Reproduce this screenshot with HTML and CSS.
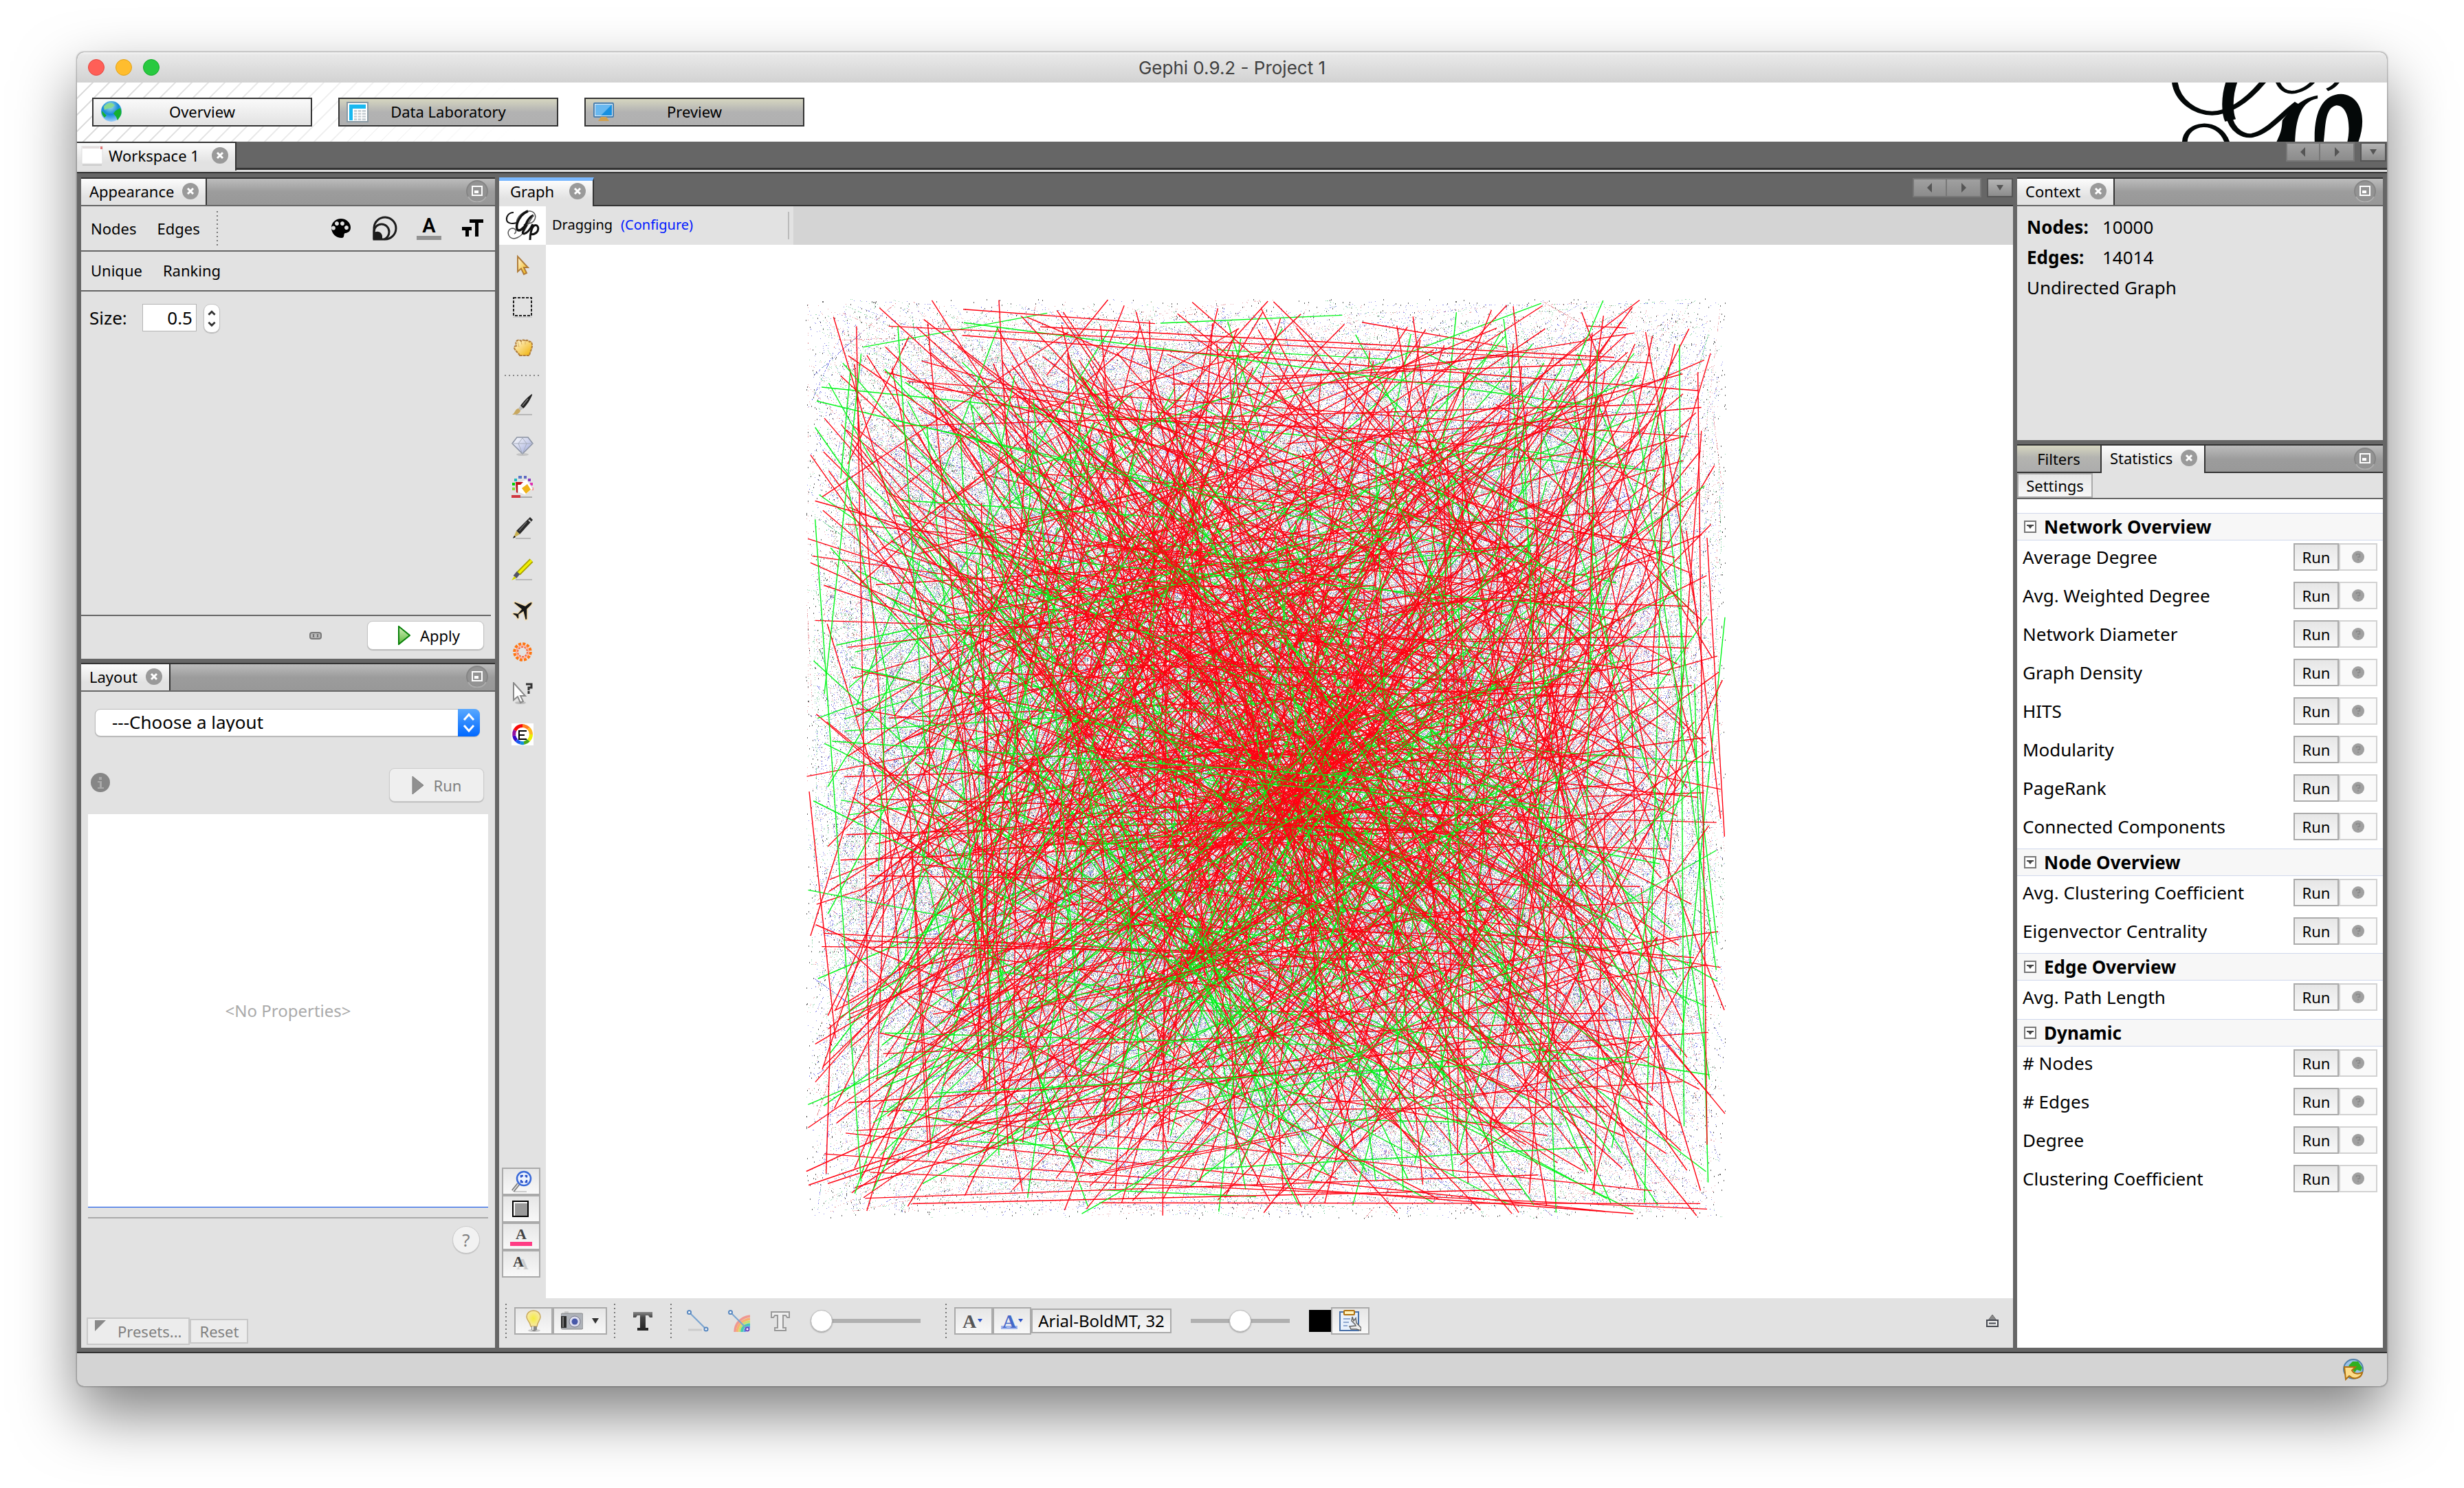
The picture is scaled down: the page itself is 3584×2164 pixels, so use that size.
FILE: index.html
```html
<!DOCTYPE html>
<html lang="en">
<head>
<meta charset="utf-8">
<title>Gephi 0.9.2 - Project 1</title>
<link rel="stylesheet" href="styles.css">
</head>
<body>
<svg class="sprite" aria-hidden="true">
  <defs>
    <linearGradient id="gold" x1="0" y1="0" x2="1" y2="1"><stop offset="0" stop-color="#fff8e0"/><stop offset="1" stop-color="#f0b000"/></linearGradient>
    <linearGradient id="leaf" x1="0" y1="0" x2="0" y2="1"><stop offset="0" stop-color="#d8f0c0"/><stop offset="1" stop-color="#58b838"/></linearGradient>
    <linearGradient id="gem" x1="0" y1="0" x2="1" y2="1"><stop offset="0" stop-color="#fff"/><stop offset="1" stop-color="#9aa4d8"/></linearGradient>
    <radialGradient id="ocean" cx=".45" cy=".25" r=".8"><stop offset="0" stop-color="#a8e0e8"/><stop offset=".5" stop-color="#1488d8"/><stop offset="1" stop-color="#b0d8ff"/></radialGradient>
    <linearGradient id="steel" x1="0" y1="0" x2="0" y2="1"><stop offset="0" stop-color="#888"/><stop offset=".3" stop-color="#444"/><stop offset="1" stop-color="#222"/></linearGradient>
    <radialGradient id="bulb"><stop offset="0" stop-color="#f4ec40"/><stop offset="1" stop-color="#f8e8a8"/></radialGradient>
  </defs>
  <symbol id="i-close" viewBox="0 0 24 24"><circle cx="12" cy="12" r="12" fill="#9a9a9a"/><path d="M8 8l8 8M16 8l-8 8" stroke="#fff" stroke-width="3"/></symbol>
  <symbol id="i-min" viewBox="0 0 32 32"><circle cx="16" cy="16" r="15" fill="#939393" stroke="#858585" stroke-width="2"/><path d="M3 24a15 15 0 0 0 26 0" fill="none" stroke="#adadad" stroke-width="2"/><rect x="9" y="9" width="14" height="13" fill="none" stroke="#fff" stroke-width="2"/><rect x="12" y="15" width="6" height="4" fill="#fff"/></symbol>
  <symbol id="i-globe" viewBox="0 0 32 32"><circle cx="16" cy="15" r="15" fill="url(#ocean)"/><path d="M5 8c3-4 8-6 12-5l4 3-5 4-6 1-4 2z" fill="#88d890"/><path d="M2 14l4 4 3 3-3 3c-3-3-4-6-4-10zM22 14l7-4c2 4 2 9 0 12l-4 6-2-5-4-5z" fill="#14b030"/></symbol>
  <symbol id="i-table" viewBox="0 0 32 32"><rect x="1" y="2" width="30" height="28" fill="#fff" stroke="#8a9aa4" stroke-width="2"/><path d="M4 5h24v6H9v17H4z" fill="#18b8f0"/><path d="M11 13h17v15H11z" fill="#c4ccd2"/><path d="M11 16.500h17M11 20.500h17M11 24.500h17M16 12v16M22 12v16" stroke="#fff" stroke-width="1.500"/></symbol>
  <symbol id="i-screen" viewBox="0 0 32 32"><rect x="2" y="3" width="28" height="20" rx="1" fill="#e8eef4" stroke="#4880b0" stroke-width="2"/><path d="M4 5h24v16H4z" fill="#1890e0"/><path d="M4 5h24L12 21H4z" fill="#68b8f0"/><path d="M12 23h8l4 6H8z" fill="#d0a050"/></symbol>
  <symbol id="i-page" viewBox="0 0 32 32"><path d="M2 29h28v2H2z" fill="#ccc"/><rect x="1" y="3" width="30" height="25" fill="#fff" stroke="#ddd"/><path d="M2 3h25v3H2z" fill="#e4dede"/><path d="M28 3h3v4h-3z" fill="#e07878"/></symbol>
  <symbol id="i-left" viewBox="0 0 16 16"><path d="M11 1v14L4 8z"/></symbol>
  <symbol id="i-right" viewBox="0 0 16 16"><path d="M5 1v14l7-7z"/></symbol>
  <symbol id="i-down" viewBox="0 0 16 16"><path d="M3 4h10l-5 8z"/></symbol>
  <symbol id="i-palette" viewBox="0 0 36 36"><path d="M18 4c8 0 14 6 14 13 0 6-5 8-8 8-3 1 0 7-5 7C11 32 4 26 4 17 4 10 10 4 18 4z"/><path d="M9 17.500a2 2 0 1 0 0 .1M14 11a2 2 0 1 0 0 .1M22 11a2 2 0 1 0 0 .1M28 17a2 2 0 1 0 0 .1" stroke="#e2e2e2" fill="#e2e2e2" stroke-width="2"/></symbol>
  <symbol id="i-rings" viewBox="0 0 36 36"><g fill="none" stroke="#1c1c1c" stroke-width="3"><path d="M2 34V17A16 16 0 1 1 18 34z"/><path d="M2 34V23a11 11 0 0 1 22 0c0 6-3 9-7 11"/></g><path d="M1 35V25c6-5 13-1 13 5v5z" fill="#1c1c1c"/></symbol>
  <symbol id="i-color" viewBox="0 0 36 36"><text x="18" y="24" text-anchor="middle" font-size="29" font-weight="600" font-family="Roboto">A</text><path d="M0 29h36v6H0z" fill="#929292"/></symbol>
  <symbol id="i-size" viewBox="0 0 36 36"><path d="M13 5h20v5h-7v20h-5V10h-8zM2 16h14v5h-4v9H7v-9H2z"/></symbol>
  <symbol id="i-play" viewBox="0 0 18 28"><path d="M1 1v26L17 14z"/></symbol>
  <symbol id="i-chain" viewBox="0 0 18 12"><rect x="1" y="2" width="16" height="9" rx="3" fill="#bbb" stroke="#777" stroke-width="2"/><path d="M5 4l2 5M7 4l-2 5M11 4l2 5M13 4l-2 5" stroke="#666"/></symbol>
  <symbol id="i-info" viewBox="0 0 28 28"><circle cx="14" cy="14" r="14" fill="#868686"/><path d="M12 6h4v4h-4zM10 12h6v9h3v2h-9v-2h3v-7h-3z" fill="#aaa"/></symbol>
  <symbol id="i-cursor" viewBox="0 0 16 16"><path d="M4.500 1.500v11l2.500-2.200 2 4.200 2-1-2-4h3z" fill="url(#gold)" stroke="#b07c38"/></symbol>
  <symbol id="i-marquee" viewBox="0 0 32 32"><path d="M2 31h28" stroke="#ccc" stroke-width="2"/><rect x="3" y="3" width="26" height="26" fill="none" stroke="#222" stroke-width="2" stroke-dasharray="4 2"/></symbol>
  <symbol id="i-hand" viewBox="0 0 32 32"><path d="M12 27c-1-3-7-7-8-11 0-2 1-3 3-3-1-4-1-7 2-8 2-1 4 0 5 1 1-2 5-2 6 0 2-2 5-1 6 1 3-1 4 2 4 5 0 6-3 9-4 15z" fill="url(#gold)" stroke="#b07c38" stroke-width="2" stroke-dasharray="4 1"/><path d="M9 7l2 8M14 7l1 4M20 7v4" stroke="#d8b060"/></symbol>
  <symbol id="i-brush" viewBox="0 0 32 32"><path d="M6 31h24" stroke="#aaa" stroke-width="1.500"/><path d="M30 1c1 2-7 16-13 21l-4-4C17 12 27 2 30 1z" fill="#222"/><path d="M24 8l-8 10" stroke="#777" stroke-width="1.500"/><path d="M13 18l4 4-4 3-3-3z" fill="#bbb"/><path d="M10 22l3 3c-1 5-6 6-12 6 4-2 4-8 9-9z" fill="#c8a860"/></symbol>
  <symbol id="i-gem" viewBox="0 0 32 32"><ellipse cx="16" cy="29" rx="9" ry="2" fill="#c4c4c4"/><path d="M8 4h16l7 9-15 15L1 13z" fill="url(#gem)" stroke="#8890a0" stroke-width="1.500"/><path d="M1 13h30M10 13l6 15 6-15-6-8z" fill="none" stroke="#a8aebc"/></symbol>
  <symbol id="i-bucket" viewBox="0 0 32 32"><path d="M2 31h28" stroke="#aaa" stroke-width="2"/><g stroke-width="4" fill="none"><path d="M1 19h4" stroke="#80e030"/><path d="M1 12h4" stroke="#00d000"/><path d="M4 6h4" stroke="#20b8c0"/><path d="M10 2h5" stroke="#5878c8"/><path d="M18 2h4" stroke="#6068c0"/><path d="M24 6h4" stroke="#8838c0"/><path d="M27 12h4" stroke="#e030b0"/><path d="M28 19h4" stroke="#ff8080"/></g><path d="M9 10l13-5 9 14-11 9-10-4z" fill="#fff" stroke="#ddd"/><path d="M15 18l8-6 5 8-7 6z" fill="#f0b418"/><path d="M6 9h11l-4 4H9v12L7 24z" fill="#c01018"/><path d="M0 28h13v4H0z" fill="#d03840"/></symbol>
  <symbol id="i-pencil" viewBox="0 0 32 32"><path d="M6 31h22" stroke="#aaa" stroke-width="1.500"/><path d="M27 0l4 4L12 25l-5-5z" fill="#2a2a2a"/><path d="M25 4l3 3" stroke="#ccc" stroke-width="2"/><path d="M22 7L11 20" stroke="#666" stroke-width="1.500"/><path d="M7 20l5 5-9 5z" fill="#c8b050"/><path d="M4 27l2 2-4 2z"/></symbol>
  <symbol id="i-marker" viewBox="0 0 32 32"><path d="M6 31h24" stroke="#aaa" stroke-width="1.500"/><path d="M29 3L10 22" stroke="#a8a000" stroke-width="7"/><path d="M29 3L10 22" stroke="#f0f000" stroke-width="3.500"/><path d="M10 21L5 27" stroke="#556" stroke-width="6"/><path d="M4 26l3 3-7 3z" fill="#d8d800"/></symbol>
  <symbol id="i-plane" viewBox="0 0 32 32"><path d="M30 4c-1-1-3 0-5 1l-5 4L5 3 3 5l11 9-5 6-6-1-2 2 5 3 3 5 2-2v-5l6-4 3 12 3-1 0-15 6-6c1-2 2-3 1-4z" fill="#161616" stroke="#f2dcb0" stroke-width="1.500"/></symbol>
  <symbol id="i-flower" viewBox="0 0 32 32"><circle cx="16" cy="16" r="11.500" fill="none" stroke="#ff7410" stroke-width="4.500" stroke-dasharray="4 2"/><circle cx="16" cy="16" r="9" fill="none" stroke="#ffb098" stroke-width="2"/><circle cx="16" cy="16" r="7" fill="none" stroke="#f86840" stroke-width="2" stroke-dasharray="3 1.400"/></symbol>
  <symbol id="i-query" viewBox="0 0 32 32"><ellipse cx="13" cy="30" rx="8" ry="2" fill="#bbb"/><path d="M3 1v25l6-5 4 9 4-2-4-8h7z" fill="#fff" stroke="#888" stroke-width="2"/><path d="M21 3h8v5h-4v4M25 13v4" fill="none" stroke="#333" stroke-width="3"/></symbol>
  <symbol id="i-wheel" viewBox="0 0 32 32"><path d="M0 0h32v32H0z" fill="#fff"/><g fill="none" stroke-width="5"><path d="M16 3.500A12.500 12.500 0 0 1 24.800 7.200" stroke="#ff8020"/><path d="M24.800 7.200A12.500 12.500 0 0 1 28.500 16" stroke="#ffb820"/><path d="M28.500 16A12.500 12.500 0 0 1 24.800 24.800" stroke="#e8f000"/><path d="M24.800 24.800A12.500 12.500 0 0 1 18 28.500" stroke="#48a818"/><path d="M18 28.500A12.500 12.500 0 0 1 13 28.200" stroke="#1090d8"/><path d="M13 28.200A12.500 12.500 0 0 1 7.200 24.800" stroke="#1858f0"/><path d="M7.200 24.800A12.500 12.500 0 0 1 3.700 18" stroke="#3808c8"/><path d="M3.700 18A12.500 12.500 0 0 1 5 10" stroke="#9010a0"/><path d="M5 10A12.500 12.500 0 0 1 16 3.500" stroke="#f80808"/></g><path d="M22 11h-11v12h11M11 17h8" fill="none" stroke="#000" stroke-width="2"/></symbol>
  <symbol id="i-zoom" viewBox="0 0 32 32"><path d="M6 31h18" stroke="#ccc" stroke-width="2"/><path d="M12 20L4 30" stroke="#777" stroke-width="5"/><path d="M12 20L4 30" stroke="#ddd" stroke-width="2"/><circle cx="20" cy="12" r="10" fill="#eef4ff" stroke="#3868d8" stroke-width="2.500"/><path d="M16 10.500V8h3M21.500 8H24v2.500M24 14v3h-2.500M19 17h-3v-3" fill="none" stroke="#2850c8" stroke-width="2.500"/></symbol>
  <symbol id="i-swatch" viewBox="0 0 32 32"><rect x="4" y="5" width="22" height="22" fill="#fff" stroke="#000" stroke-width="2"/><path d="M7 8h18v18H7z" fill="#999"/></symbol>
  <symbol id="i-apink" viewBox="0 0 32 32"><text x="16" y="20" text-anchor="middle" font-size="22" font-weight="700" font-family="Liberation Serif" fill="#444">A</text><path d="M0 24h32v6H0z" fill="#ff3c84"/></symbol>
  <symbol id="i-ashadow" viewBox="0 0 32 32"><text x="18" y="24" text-anchor="middle" font-size="24" font-weight="700" font-family="Liberation Serif" fill="#ccc">A</text><text x="12" y="20" text-anchor="middle" font-size="22" font-weight="700" font-family="Liberation Serif" fill="#3a3a3a">A</text></symbol>
  <symbol id="i-bulb" viewBox="0 0 32 32"><ellipse cx="17" cy="30" rx="9" ry="2" fill="#ccc"/><path d="M16 1c6 0 10 4 10 9s-4 7-5 14h-9C11 17 6 15 6 10s4-9 10-9z" fill="url(#bulb)" stroke="#c8a858" stroke-width="1.500"/><path d="M13 24h8v5l-3 2h-2l-3-2z" fill="#888"/><path d="M15 24v5" stroke="#eee" stroke-width="2"/></symbol>
  <symbol id="i-camera" viewBox="0 0 32 32"><path d="M5 2h6v4H5z" fill="#ccc"/><rect x="0" y="5" width="32" height="23" rx="2" fill="#aeb2b8" stroke="#888"/><path d="M0 9h8v17H0z" fill="#2a2a2a"/><path d="M3 10v15" stroke="#777" stroke-width="2"/><circle cx="20" cy="17" r="8" fill="#dde" stroke="#778"/><circle cx="20" cy="17" r="4.500" fill="#4858a8"/></symbol>
  <symbol id="i-tsolid" viewBox="0 0 32 32"><path d="M2 3h28v8h-4l-2-3h-4v18h4v4H8v-4h4V8H8l-2 3H2z" fill="url(#steel)"/></symbol>
  <symbol id="i-tline" viewBox="0 0 32 32"><path d="M3 3h26v8h-3l-2-3h-4v18h4v4H8v-4h4V8H8l-2 3H3z" fill="#eee" stroke="#999" stroke-width="2"/></symbol>
  <symbol id="i-edge" viewBox="0 0 32 32"><path d="M2 29h20" stroke="#ccc" stroke-width="3"/><path d="M4 4l24 24" stroke="#7aa4d0" stroke-width="2"/><g fill="#fff" stroke="#5888c0" stroke-width="2"><circle cx="3.500" cy="3.500" r="2.500"/><circle cx="28" cy="28" r="2.500"/></g></symbol>
  <symbol id="i-rainbow" viewBox="0 0 32 32"><g fill="none" stroke-width="3.500"><path d="M10 32C10 20 18 11 32 9" stroke="#f09890"/><path d="M13.500 32C13.500 22 20 15 32 13" stroke="#f8b070"/><path d="M17 32C17 24 22 18 32 17" stroke="#c8e070"/><path d="M20 32C20 26 24 22 32 21" stroke="#48c8b0"/><path d="M24 32C24 28 27 25 32 24.500" stroke="#58a0e8"/></g><path d="M4 4l24 24" stroke="#7aa4d0" stroke-width="2"/><circle cx="3.500" cy="3.500" r="2.500" fill="#fff" stroke="#5888c0" stroke-width="2"/><circle cx="28" cy="28" r="2.500" fill="#fff" stroke="#6848c0" stroke-width="2"/></symbol>
  <symbol id="i-fontup" viewBox="0 0 32 32"><text x="10" y="26" text-anchor="middle" font-size="28" font-weight="700" font-family="Liberation Serif" fill="#555">A</text><path d="M22 13h7l-3.500 5z" fill="#2850c8"/></symbol>
  <symbol id="i-fontline" viewBox="0 0 32 32"><path d="M0 23h24v5H0z" fill="#a0b4ec"/><text x="12" y="26" text-anchor="middle" font-size="28" font-weight="700" font-family="Liberation Serif" fill="#4468c8">A</text><path d="M25 13h7l-3.500 5z" fill="#2850c8"/></symbol>
  <symbol id="i-clip" viewBox="0 0 32 32"><rect x="1" y="3" width="27" height="27" fill="#e8f0fc" stroke="#4870a8" stroke-width="2"/><path d="M6 13h10M6 18h8M6 23h6" stroke="#90a8d0" stroke-width="2"/><rect x="7" y="1" width="15" height="6" rx="1" fill="#fff4c0" stroke="#b07010" stroke-width="2"/><path d="M19 10l-1 6 5 5 1 2-9 1 2 4h8l6 2 1-4-3-3-4-4-1-7-3 4z" fill="#eee" stroke="#666" stroke-width="1.500"/></symbol>
  <symbol id="i-eject" viewBox="0 0 20 20"><path d="M10 1L4 9h12z" fill="#888" stroke="#666"/><rect x="2" y="9" width="16" height="9" fill="#e8e8e8" stroke="#454850" stroke-width="2"/><path d="M5 13.500h10" stroke="#454850" stroke-width="2"/></symbol>
  <symbol id="i-update" viewBox="0 0 32 32"><circle cx="17" cy="15" r="14" fill="#98c0e8" stroke="#5080a8" stroke-width="2"/><path d="M16 4l8 0 6 9-2 5-6-2-3 4-5-7-4-3z" fill="#30b020"/><path d="M4 12h16l-5 5c3 5 8 6 15 3-1 7-11 12-19 5l-5 5z" fill="#fcdc88" stroke="#b07010" stroke-width="2"/></symbol>
  <symbol id="i-fold" viewBox="0 0 18 18"><rect x="1" y="1" width="16" height="16" fill="#fff" stroke="#777" stroke-width="2"/><path d="M4 6h10v2h-2l-3 4-3-4H4z" fill="#444"/></symbol>
  <symbol id="i-help" viewBox="0 0 18 18"><circle cx="9" cy="9" r="9" fill="#a0a0a0"/><path d="M6.500 7V5h5v4H9v1.500M9 12v2" fill="none" stroke="#878787" stroke-width="1.500"/></symbol>
  <symbol id="i-gephi" viewBox="0 0 50 46"><g fill="none" stroke="#111"><path d="M12 4C5 4 1 10 2 15c1 5 8 6 14 4" stroke-width="2"/><path d="M16 19C17 10 26 1 36 2c8 1 10 9 5 15-4 4-9 2-14 5" stroke-width="1.500" stroke="#555"/><path d="M33 2C22 6 15 20 17 28c2 5 10 0 14-9 2-5 6-9 10-11" stroke-width="3.500"/><path d="M41 8c-4 6-10 16-14 24-4 7-14 13-20 8-5-5-3-12 3-13 6 0 7 6 3 8" stroke-width="1.500" stroke="#555"/><path d="M31 22c-4 6-8 13-4 13 6-1 10-8 13-14" stroke-width="3"/><path d="M36 44c0-8 2-18 6-21 5-2 7 3 5 8-2 4-8 6-11 4" stroke-width="3"/></g></symbol>
</svg>

<div class="window">
  <header class="titlebar">
    <div class="lights"><button class="light red" aria-label="Close"></button><button class="light yellow" aria-label="Minimize"></button><button class="light green" aria-label="Zoom"></button></div>
    <h1>Gephi 0.9.2 - Project 1</h1>
  </header>

  <nav class="banner">
    <button class="mode active"><svg><use href="#i-globe"/></svg><span>Overview</span></button>
    <button class="mode"><svg><use href="#i-table"/></svg><span>Data Laboratory</span></button>
    <button class="mode"><svg><use href="#i-screen"/></svg><span>Preview</span></button>
    <svg class="brand" viewBox="860 180 580 258" preserveAspectRatio="none" aria-label="Gephi">
      <g fill="none" stroke="#040808">
        <path d="M873 180C882 262 935 314 985 314C1050 312 1105 235 1140 174" stroke-width="18"/>
        <path d="M1045 172C1028 240 1030 312 1040 345" stroke-width="34"/>
        <path d="M1034 318C1045 400 1085 415 1105 411C1150 400 1190 325 1240 270" stroke-width="18"/>
        <path d="M1182 178C1195 222 1218 226 1236 221C1258 214 1276 196 1288 178M1330 212Q1352 200 1364 172" stroke-width="13"/>
        <path d="M903 440C905 350 1005 335 1030 440" stroke-width="16"/>
      </g>
      <path d="M1302 236L1302 250C1240 265 1236 380 1234 440L1178 440C1196 390 1194 370 1196 345C1215 310 1245 250 1302 236z" fill="#040808"/>
      <path d="M1293 440C1290 300 1320 232 1372 230C1430 234 1452 330 1424 440L1391 440C1402 370 1394 280 1358 280C1322 290 1326 380 1320 440z" fill="#040808"/>
    </svg>
  </nav>

  <div class="workspaces">
    <div class="tab"><svg class="icon"><use href="#i-page"/></svg><span>Workspace 1</span><button class="close" aria-label="Close workspace"><svg><use href="#i-close"/></svg></button></div>
    <div class="scrollers"><button aria-label="Previous"><svg><use href="#i-left"/></svg></button><button aria-label="Next"><svg><use href="#i-right"/></svg></button><button class="list" aria-label="List"><svg><use href="#i-down"/></svg></button></div>
  </div>

  <main class="desk">
    <div class="column">
      <section class="panel appearance">
        <div class="tabs"><div class="tab"><span>Appearance</span><button class="close" aria-label="Close Appearance"><svg><use href="#i-close"/></svg></button></div><button class="minimize" aria-label="Minimize"><svg><use href="#i-min"/></svg></button></div>
        <div class="elements">
          <button>Nodes</button><button>Edges</button><i class="dots-v"></i>
          <div class="aspects">
            <button aria-label="Color"><svg><use href="#i-palette"/></svg></button><button aria-label="Size"><svg><use href="#i-rings"/></svg></button><button aria-label="Label color"><svg><use href="#i-color"/></svg></button><button aria-label="Label size"><svg><use href="#i-size"/></svg></button>
          </div>
        </div>
        <div class="kinds"><button>Unique</button><button>Ranking</button></div>
        <div class="size-row">
          <label for="size">Size:</label><input id="size" type="text" inputmode="decimal" value="0.5">
          <button class="stepper" aria-label="Step size"><svg viewBox="0 0 24 42"><path d="M7 15l5-5 5 5M7 27l5 5 5-5"/></svg></button>
        </div>
        <footer class="apply-row"><button class="chain" aria-label="Chain"><svg><use href="#i-chain"/></svg></button><button class="push apply"><svg><use href="#i-play"/></svg>Apply</button></footer>
      </section>

      <section class="panel layout">
        <div class="tabs"><div class="tab"><span>Layout</span><button class="close" aria-label="Close Layout"><svg><use href="#i-close"/></svg></button></div><button class="minimize" aria-label="Minimize"><svg><use href="#i-min"/></svg></button></div>
        <div class="chooser">
          <select aria-label="Layout algorithm"><option>---Choose a layout</option></select>
          <svg viewBox="0 0 32 40"><path d="M9 16l7-8 7 8M9 24l7 8 7-8"/></svg>
        </div>
        <div class="run-row"><svg class="info"><use href="#i-info"/></svg><button class="push run" disabled><svg><use href="#i-play"/></svg>Run</button></div>
        <div class="properties">&lt;No Properties&gt;</div>
        <div class="help-row"><button aria-label="Help">?</button></div>
        <footer class="presets"><button class="flat preset" disabled><svg viewBox="0 0 16 16"><path d="M0 0h16L0 16z" fill="#888"/></svg>Presets...</button><button class="flat" disabled>Reset</button></footer>
      </section>
    </div>

    <section class="graph">
      <div class="graph-tabs">
        <div class="tab"><span>Graph</span><button class="close" aria-label="Close Graph"><svg><use href="#i-close"/></svg></button></div>
        <div class="scrollers"><button aria-label="Previous"><svg><use href="#i-left"/></svg></button><button aria-label="Next"><svg><use href="#i-right"/></svg></button><button class="list" aria-label="List"><svg><use href="#i-down"/></svg></button></div>
      </div>
      <div class="options">
        <div class="badge"><svg><use href="#i-gephi"/></svg></div>
        <div class="mouse"><span>Dragging</span><a href="#configure">(Configure)</a></div>
      </div>
      <div class="stage">
        <div class="tools">
          <button aria-label="Direct selection"><svg><use href="#i-cursor"/></svg></button>
          <button aria-label="Rectangle selection"><svg><use href="#i-marquee"/></svg></button>
          <button aria-label="Drag"><svg><use href="#i-hand"/></svg></button>
          <i class="dots-h"></i>
          <button aria-label="Painter"><svg><use href="#i-brush"/></svg></button>
          <button aria-label="Sizer"><svg><use href="#i-gem"/></svg></button>
          <button aria-label="Brush"><svg><use href="#i-bucket"/></svg></button>
          <button aria-label="Node pencil"><svg><use href="#i-pencil"/></svg></button>
          <button aria-label="Edge pencil"><svg><use href="#i-marker"/></svg></button>
          <button aria-label="Shortest path"><svg><use href="#i-plane"/></svg></button>
          <button aria-label="Heat map"><svg><use href="#i-flower"/></svg></button>
          <button aria-label="Edit"><svg><use href="#i-query"/></svg></button>
          <button aria-label="Excentric labels"><svg><use href="#i-wheel"/></svg></button>
          <div class="resets">
            <button class="flat" aria-label="Center on graph"><svg><use href="#i-zoom"/></svg></button>
            <button class="flat" aria-label="Reset colors"><svg><use href="#i-swatch"/></svg></button>
            <button class="flat" aria-label="Reset label colors"><svg><use href="#i-apink"/></svg></button>
            <button class="flat" aria-label="Reset label visibility"><svg><use href="#i-ashadow"/></svg></button>
          </div>
        </div>
        <div class="view"><canvas id="network"></canvas></div>
      </div>
      <div class="settings">
        <i class="dots-v"></i>
        <div class="group"><button class="flat" aria-label="Background"><svg><use href="#i-bulb"/></svg></button><button class="flat camera" aria-label="Screenshot"><svg><use href="#i-camera"/></svg><svg class="arrow"><use href="#i-down"/></svg></button></div>
        <i class="dots-v"></i>
        <button class="bare wide" aria-label="Show node labels"><svg><use href="#i-tsolid"/></svg></button>
        <i class="dots-v"></i>
        <div class="edges"><button class="bare" aria-label="Show edges"><svg><use href="#i-edge"/></svg></button><button class="bare" aria-label="Edge color"><svg><use href="#i-rainbow"/></svg></button><button class="bare" aria-label="Show edge labels"><svg><use href="#i-tline"/></svg></button><input type="range" aria-label="Edge weight scale" min="0" max="100" value="0"></div>
        <i class="dots-v"></i>
        <div class="group"><button class="flat" aria-label="Size mode"><svg><use href="#i-fontup"/></svg></button><button class="flat" aria-label="Color mode"><svg><use href="#i-fontline"/></svg></button><button class="flat font">Arial-BoldMT, 32</button></div>
        <input class="font-scale" type="range" aria-label="Font size scale" min="0" max="100" value="50">
        <div class="group"><button class="ink" aria-label="Default color"></button><button class="flat" aria-label="Label attributes"><svg><use href="#i-clip"/></svg></button></div>
        <button class="eject" aria-label="Expand"><svg><use href="#i-eject"/></svg></button>
      </div>
    </section>

    <div class="column">
      <section class="panel context">
        <div class="tabs"><div class="tab"><span>Context</span><button class="close" aria-label="Close Context"><svg><use href="#i-close"/></svg></button></div><button class="minimize" aria-label="Minimize"><svg><use href="#i-min"/></svg></button></div>
        <dl><dt>Nodes:</dt><dd>10000</dd><dt>Edges:</dt><dd>14014</dd></dl>
        <p>Undirected Graph</p>
      </section>

      <section class="panel stats">
        <div class="tabs"><button class="tab back">Filters</button><div class="tab front"><span>Statistics</span><button class="close" aria-label="Close Statistics"><svg><use href="#i-close"/></svg></button></div><button class="minimize" aria-label="Minimize"><svg><use href="#i-min"/></svg></button></div>
        <div class="stats-bar"><button class="flat">Settings</button></div>
        <div class="metrics">
          <h2><svg><use href="#i-fold"/></svg>Network Overview</h2>
          <ul>
            <li><span>Average Degree</span><button class="flat">Run</button><button class="flat" disabled aria-label="Report"><svg><use href="#i-help"/></svg></button></li>
            <li><span>Avg. Weighted Degree</span><button class="flat">Run</button><button class="flat" disabled aria-label="Report"><svg><use href="#i-help"/></svg></button></li>
            <li><span>Network Diameter</span><button class="flat">Run</button><button class="flat" disabled aria-label="Report"><svg><use href="#i-help"/></svg></button></li>
            <li><span>Graph Density</span><button class="flat">Run</button><button class="flat" disabled aria-label="Report"><svg><use href="#i-help"/></svg></button></li>
            <li><span>HITS</span><button class="flat">Run</button><button class="flat" disabled aria-label="Report"><svg><use href="#i-help"/></svg></button></li>
            <li><span>Modularity</span><button class="flat">Run</button><button class="flat" disabled aria-label="Report"><svg><use href="#i-help"/></svg></button></li>
            <li><span>PageRank</span><button class="flat">Run</button><button class="flat" disabled aria-label="Report"><svg><use href="#i-help"/></svg></button></li>
            <li><span>Connected Components</span><button class="flat">Run</button><button class="flat" disabled aria-label="Report"><svg><use href="#i-help"/></svg></button></li>
          </ul>
          <h2><svg><use href="#i-fold"/></svg>Node Overview</h2>
          <ul>
            <li><span>Avg. Clustering Coefficient</span><button class="flat">Run</button><button class="flat" disabled aria-label="Report"><svg><use href="#i-help"/></svg></button></li>
            <li><span>Eigenvector Centrality</span><button class="flat">Run</button><button class="flat" disabled aria-label="Report"><svg><use href="#i-help"/></svg></button></li>
          </ul>
          <h2><svg><use href="#i-fold"/></svg>Edge Overview</h2>
          <ul>
            <li><span>Avg. Path Length</span><button class="flat">Run</button><button class="flat" disabled aria-label="Report"><svg><use href="#i-help"/></svg></button></li>
          </ul>
          <h2><svg><use href="#i-fold"/></svg>Dynamic</h2>
          <ul>
            <li><span># Nodes</span><button class="flat">Run</button><button class="flat" disabled aria-label="Report"><svg><use href="#i-help"/></svg></button></li>
            <li><span># Edges</span><button class="flat">Run</button><button class="flat" disabled aria-label="Report"><svg><use href="#i-help"/></svg></button></li>
            <li><span>Degree</span><button class="flat">Run</button><button class="flat" disabled aria-label="Report"><svg><use href="#i-help"/></svg></button></li>
            <li><span>Clustering Coefficient</span><button class="flat">Run</button><button class="flat" disabled aria-label="Report"><svg><use href="#i-help"/></svg></button></li>
          </ul>
        </div>
      </section>
    </div>
  </main>

  <footer class="status"><button aria-label="Updates"><svg><use href="#i-update"/></svg></button></footer>
</div>
<script src="graph.js"></script>
</body>
</html>
```
FILE: styles.css
```css
* { box-sizing: border-box; }

body {
  margin: 0;
  height: 100vh;
  padding: 76px 112px 148px;
  background: #fff;
  color: #000;
  font: 22px/28px "Noto Sans", "Open Sans", sans-serif;
}

button, input, select { font: inherit; color: inherit; }
button { margin: 0; padding: 0; border: 0; background: none; }
svg { display: block; }
h1, h2, p, ul, dl, dd { margin: 0; padding: 0; }
.sprite { position: absolute; width: 0; height: 0; }

/* window frame */
.window {
  display: flex;
  flex-direction: column;
  height: 100%;
  overflow: hidden;
  border-radius: 10px;
  background: #666;
  box-shadow: 0 0 2px 1px rgba(0, 0, 0, .3), 0 40px 88px rgba(0, 0, 0, .5);
}
.titlebar {
  display: grid;
  grid-template-columns: 1fr auto 1fr;
  align-items: center;
  height: 44px;
  background: linear-gradient(#f4f4f4, #e8e8e8 4px, #d2d2d2);
}
.lights { display: flex; gap: 16px; padding-left: 16px; }
.light { width: 24px; height: 24px; border-radius: 50%; }
.red { background: #ff5f57; border: 1px solid #e2463f; }
.yellow { background: #ffbd2e; border: 1px solid #e1a116; }
.green { background: #28c940; border: 1px solid #12ac28; }
.titlebar h1 { padding-top: 2px; font: 400 26px/30px Inter, sans-serif; color: #404040; }

.banner {
  display: flex;
  align-items: center;
  gap: 38px;
  height: 86px;
  flex: none;
  padding: 0 34px 0 22px;
  background:
    linear-gradient(90deg, rgba(255, 255, 255, 0), #fff 640px),
    repeating-linear-gradient(135deg, #fff 0 15px, #dcdcdc 15px 17px);
}
.mode {
  display: grid;
  grid-template-columns: 32px 1fr 32px;
  align-items: center;
  width: 320px;
  height: 42px;
  padding: 0 10px;
  border: 2px solid #333;
  background: linear-gradient(#d6d6c0, #c0c0b8 30%, #b2b2b2 50%, #b0b0b0);
}
.mode.active { background: linear-gradient(#fafafa, #e2e2e2); }
.mode svg { width: 32px; height: 32px; }
.mode span { padding-bottom: 2px; }
.brand { width: 281px; height: 86px; margin-left: auto; }

.workspaces {
  display: flex;
  justify-content: space-between;
  flex: none;
  height: 46px;
  border-bottom: 2px solid #333;
  background: linear-gradient(#666 38px, #333 38px 41px, #ddd 41px);
}
.workspaces .tab { height: 42px; padding: 0 10px 4px 6px; gap: 8px; border-top: 2px solid #333; }
.workspaces .tab .close { margin-left: 10px; }
.workspaces .icon { width: 32px; height: 32px; }

.scrollers { display: flex; }
.scrollers button {
  display: grid;
  place-items: center;
  width: 50px;
  height: 28px;
  border: 2px solid #777;
  background: linear-gradient(#a0a0a0, #8c8c8c);
}
.scrollers button + button { border-left-width: 0; }
.scrollers svg { width: 16px; height: 16px; fill: #555; }
.scrollers .list { width: 38px; margin-left: 8px; border: 2px solid #555; background: linear-gradient(#b4b4b4, #8c8c8c); }
.workspaces .scrollers { padding: 1px 1px 0 0; }

/* tabs */
.tab {
  display: flex;
  align-items: center;
  gap: 12px;
  padding: 0 10px 3px 12px;
  border-right: 2px solid #333;
  background: linear-gradient(#fcfcfc, #e2e2e2 70%);
}
.close svg { width: 24px; height: 24px; }
.tabs {
  display: flex;
  flex: none;
  height: 42px;
  border-top: 2px solid #333;
  border-bottom: 2px solid #666;
  background: linear-gradient(#bcbcbc, #9c9c9c 50%, #989898);
}
.minimize { margin-left: auto; padding: 0 10px 2px 0; }
.minimize svg { width: 32px; height: 32px; }

/* docks */
.desk {
  display: grid;
  grid-template-columns: 602px minmax(0, 1fr) 532px;
  grid-template-rows: minmax(0, 1fr);
  gap: 6px;
  flex: 1;
  min-height: 0;
  padding: 6px;
}
.column { display: flex; flex-direction: column; gap: 6px; min-height: 0; }
.panel { display: flex; flex-direction: column; background: #e2e2e2; }

.dots-v { width: 2px; height: 50px; background: repeating-linear-gradient(#777 0 2px, transparent 2px 6px); }
.dots-h { height: 2px; margin: 9px 8px 11px; background: repeating-linear-gradient(90deg, #888 0 2px, transparent 2px 6px); }

.flat {
  display: grid;
  place-items: center;
  border: 2px solid #aaa;
  background: linear-gradient(#e6e6e6, #f8f8f8);
}
.flat svg { width: 32px; height: 32px; }
.flat:disabled { border-color: #d2d2d2; background: #fafafa; }

.push {
  display: flex;
  align-items: center;
  justify-content: center;
  gap: 14px;
  border: 1px solid #c4c4c4;
  border-radius: 8px;
  background: #fff;
  box-shadow: 0 1px 1px rgba(0, 0, 0, .2);
}
.push svg { width: 18px; height: 28px; }

/* appearance */
.appearance { height: 700px; }
.elements, .kinds { display: flex; align-items: center; gap: 30px; padding-left: 14px; border-bottom: 2px solid #666; }
.elements { height: 66px; }
.kinds { height: 58px; padding-bottom: 2px; }
.elements .dots-v { margin-left: -6px; }
.aspects { display: flex; margin-left: auto; }
.aspects button { display: grid; place-items: center; width: 64px; height: 64px; }
.aspects svg { width: 36px; height: 36px; }
.size-row { display: flex; align-items: flex-start; flex: 1; padding: 18px 12px; font-size: 26px; line-height: 40px; }
.size-row label { width: 77px; }
.size-row input { width: 79px; height: 40px; padding: 0 5px; border: 1px solid #b4b4b4; background: #fff; text-align: right; }
.stepper { width: 24px; height: 42px; margin-left: 10px; border: 1px solid #c4c4c4; border-radius: 10px; background: #fff; box-shadow: 0 1px 1px rgba(0, 0, 0, .2); }
.stepper path, .chooser path { fill: none; stroke: #333; stroke-width: 3; }
.apply-row { display: flex; align-items: center; justify-content: flex-end; gap: 66px; height: 64px; margin-right: 6px; padding: 0 10px 6px 0; border-top: 2px solid #666; }
.chain svg { width: 18px; height: 12px; }
.apply { width: 170px; height: 42px; padding-left: 10px; }
.apply svg { fill: url(#leaf); stroke: #088008; stroke-width: 2; }

/* layout */
.layout { flex: 1; min-height: 0; padding-bottom: 4px; }
.chooser { display: grid; grid-template-columns: 1fr 32px; height: 40px; margin: 25px 22px 0 20px; font-size: 26px; }
.chooser select { grid-area: 1 / 1 / 2 / 3; padding: 0 24px 2px; border: 1px solid #bbb; border-radius: 8px; background: #fff; appearance: none; box-shadow: 0 1px 1px rgba(0, 0, 0, .2); }
.chooser svg { grid-area: 1 / 2; z-index: 1; width: 32px; height: 40px; border-radius: 0 8px 8px 0; background: linear-gradient(#58a8ff, #0068ff); pointer-events: none; }
.chooser path { stroke: #fff; }
.run-row { display: flex; justify-content: space-between; margin: 46px 16px 18px 14px; }
.info { width: 28px; height: 28px; margin-top: 7px; }
.run { width: 138px; height: 49px; background: #efefef; color: #808080; border-color: #ccc; }
.run svg { fill: #909090; stroke: #7c7c7c; stroke-width: 1; }
.properties { display: grid; place-items: center; flex: 1; margin: 0 10px; background: #fff; border-bottom: 1px solid #0048e8; color: #aaa; font-size: 24px; }
.help-row { display: flex; justify-content: flex-end; height: 146px; margin: 14px 10px 0; padding: 11px 12px 0 0; border-top: 2px solid #aaa; }
.help-row button { width: 40px; height: 40px; border: 1px solid #ccc; border-radius: 50%; background: #f2f2f2; color: #808080; font-size: 26px; line-height: 36px; box-shadow: 0 1px 1px rgba(0, 0, 0, .15); }
.presets { display: flex; align-items: center; padding-left: 8px; }
.presets .flat { height: 36px; padding: 0 12px; border-color: #c8c8c8; background: #ececec; color: #808080; }
.presets .preset { display: flex; align-items: flex-start; gap: 17px; height: 40px; padding: 0 10px; line-height: 36px; }
.presets .preset svg { width: 16px; height: 16px; margin-top: 2px; }

/* graph */
.graph { display: flex; flex-direction: column; min-height: 0; background: #e2e2e2; }
.graph-tabs { display: flex; justify-content: space-between; flex: none; height: 42px; background: linear-gradient(#666 40px, #333 40px); }
.graph-tabs .tab { gap: 22px; padding: 0 10px 7px 16px; border-top: 5px solid #7ab8ff; }
.graph-tabs .scrollers { padding-top: 1px; }
.options { display: flex; flex: none; height: 56px; background: #d4d4d4; font-size: 20px; }
.badge { width: 68px; padding: 4px 9px; background: #fff; }
.badge svg { width: 50px; height: 48px; }
.mouse { display: flex; gap: 12px; width: 360px; padding: 13px 0 0 9px; background: linear-gradient(#bbb, #bbb) 352px 8px / 2px 40px no-repeat #e2e2e2; }
.mouse a { color: #0018ff; text-decoration: none; }
.stage { display: flex; flex: 1; min-height: 0; }
.tools { display: flex; flex-direction: column; width: 68px; }
.tools > button { display: grid; place-items: center; height: 60px; }
.tools > button svg { width: 32px; height: 32px; }
.resets { margin: auto 8px 30px 4px; }
.resets .flat { width: 56px; height: 40px; }
.view { flex: 1; min-width: 0; background: #fff; }
.view canvas { display: block; width: 100%; height: 100%; }

.settings { display: flex; align-items: center; flex: none; height: 72px; padding: 0 20px 6px 9px; }
.group { display: flex; align-items: center; margin: 0 10px 0 11px; }
.group .flat { width: 56px; height: 40px; }
.group .camera { display: flex; align-items: center; gap: 10px; width: 79px; padding-left: 10px; }
.camera .arrow { width: 16px; height: 16px; fill: #333; }
.group .font { width: 204px; height: 36px; font-size: 24px; }
.bare { display: grid; place-items: center; width: 60px; height: 40px; }
.bare.wide { width: 80px; }
.bare svg { width: 32px; height: 32px; }
.edges { display: flex; align-items: center; gap: 0; padding: 0 36px 0 8px; }
input[type="range"] { width: 160px; height: 32px; margin: 0; appearance: none; background: linear-gradient(#b0b0b0, #b0b0b0) center / 100% 6px no-repeat; }
input[type="range"]::-webkit-slider-thumb { appearance: none; width: 32px; height: 32px; border: 1px solid #bbb; border-radius: 50%; background: #fff; box-shadow: 0 1px 2px rgba(0, 0, 0, .3); }
.settings .edges input { margin-left: 14px; }
.settings .font-scale { width: 144px; margin: 0 17px 0 18px; }
.ink { width: 32px; height: 32px; background: #000; }
.eject { margin-left: auto; }
.eject svg { width: 20px; height: 20px; }

/* context */
.context { height: 382px; font-size: 26px; line-height: 44px; }
.context .tab { font-size: 22px; gap: 14px; }
.context dl { display: grid; grid-template-columns: 110px 1fr; padding: 8px 0 0 14px; }
.context dt { font-weight: 700; }
.context p { padding-left: 14px; }

/* statistics */
.stats { flex: 1; min-height: 0; }
.tab.back { width: 123px; justify-content: center; background: linear-gradient(#d6d6c0, #b4b4b0 45%, #acacac); border-bottom: 2px solid #333; padding: 0; }
.stats .tabs { border-bottom: 0; box-shadow: inset 0 -2px #333; }
.stats .front { padding-bottom: 5px; }
.stats-bar { height: 38px; border-bottom: 2px solid #666; }
.stats-bar .flat { width: 110px; height: 36px; }
.metrics { flex: 1; padding-top: 20px; background: #fff; font-size: 26px; }
.metrics h2 { display: flex; align-items: center; gap: 11px; height: 40px; padding-left: 10px; border: solid #d0d8ec; border-width: 1px 0; background: #f7f7f7; font-size: 26px; }
.metrics h2 svg { width: 18px; height: 18px; }
.metrics ul { list-style: none; }
.metrics li { display: flex; align-items: center; height: 56px; padding: 4px 8px 12px; }
.metrics li span { flex: 1; }
.metrics .flat { width: 66px; height: 40px; font-size: 22px; }
.metrics .flat:disabled { width: 56px; }
.metrics .flat svg { width: 18px; height: 18px; }

/* status bar */
.status { display: flex; align-items: center; justify-content: flex-end; flex: none; height: 50px; padding-right: 34px; border-top: 2px solid #333; background: #d4d4d4; }
.status svg { width: 32px; height: 32px; }
```
FILE: graph.js
```js
// Draws a random network of 10000 nodes: pale hairline edges seen as speckle,
// heavier edges as solid red and green lines.
const canvas = document.getElementById("network");
const W = canvas.clientWidth, H = canvas.clientHeight;
canvas.width = W;
canvas.height = H;
const ctx = canvas.getContext("2d");

let seed = 20177;
function rand() {
  seed ^= seed << 13;
  seed ^= seed >>> 17;
  seed ^= seed << 5;
  return (seed >>> 0) / 4294967296;
}

const size = Math.min(W, H) * 0.873;
const ox = (W - size) / 2 - 20, oy = (H - size) / 2 - 19;

// speckle: points sampled along random thin edges
const tints = ["rgba(215,80,90,.5)", "rgba(50,180,100,.5)", "rgba(60,60,220,.6)"];
for (let i = 0; i < 11000; i++) {
  const x1 = rand(), y1 = rand(), x2 = rand(), y2 = rand();
  ctx.fillStyle = tints[i % 3];
  for (let k = 0; k < 64; k++) {
    const t = rand();
    ctx.fillRect(Math.round(ox + (x1 + (x2 - x1) * t) * size), Math.round(oy + (y1 + (y2 - y1) * t) * size), 1, 1);
  }
}
ctx.fillStyle = "rgba(0,0,0,.6)";
for (let i = 0; i < 10000; i++) {
  ctx.fillRect(Math.round(ox + rand() * size), Math.round(oy + rand() * size), 1, 2);
}

const clamp = v => Math.max(0, Math.min(1, v));
function edge(x1, y1, x2, y2, color) {
  ctx.strokeStyle = color;
  ctx.beginPath();
  ctx.moveTo(ox + clamp(x1) * size, oy + clamp(y1) * size);
  ctx.lineTo(ox + clamp(x2) * size, oy + clamp(y2) * size);
  ctx.stroke();
}
const RED = "#ff0010", GREEN = "#00f518";
ctx.lineWidth = 1.4;

// hubs with many incident heavy edges
const hubs = [[.41, .30], [.53, .55], [.53, .55], [.43, .71], [.58, .5]];
for (let i = 0; i < 1080; i++) {
  const color = rand() < .25 ? GREEN : RED;
  if (i % 7 === 0) {
    const h = hubs[Math.floor(rand() * hubs.length)];
    const a = rand() * Math.PI, l = .06 + rand() * .2, m = .06 + rand() * .2;
    const cx = h[0] + (rand() - .5) * .06, cy = h[1] + (rand() - .5) * .06;
    edge(cx - Math.cos(a) * l, cy - Math.sin(a) * l, cx + Math.cos(a) * m, cy + Math.sin(a) * m, color);
  } else {
    edge(rand(), rand(), rand(), rand(), color);
  }
}

// long outer edges
[
  [.08, .01, .75, .62], [.09, .03, .92, .07], [.17, .04, .97, .1], [.11, .09, .96, .15],
  [.24, .02, .86, .28], [.005, .17, .42, .76], [.02, .13, .38, .55], [.055, .03, .07, .92],
  [.03, .02, .26, .78], [.01, .35, .96, .38], [.01, .22, .69, .41], [.07, .95, .98, .99],
  [.02, .93, .9, .995], [.97, .08, .98, .92], [.98, .26, .999, .585], [.13, .89, .92, .97]
].forEach(e => edge(e[0], e[1], e[2], e[3], RED));
[
  [.1, .03, .13, .5], [.06, .06, .02, .43], [.01, .24, .06, .96], [.01, .14, .47, .8],
  [.95, .05, .955, .9], [.9, .1, .99, .73], [.04, .07, .5, .6], [.3, .995, .99, .6]
].forEach(e => edge(e[0], e[1], e[2], e[3], GREEN));
```
